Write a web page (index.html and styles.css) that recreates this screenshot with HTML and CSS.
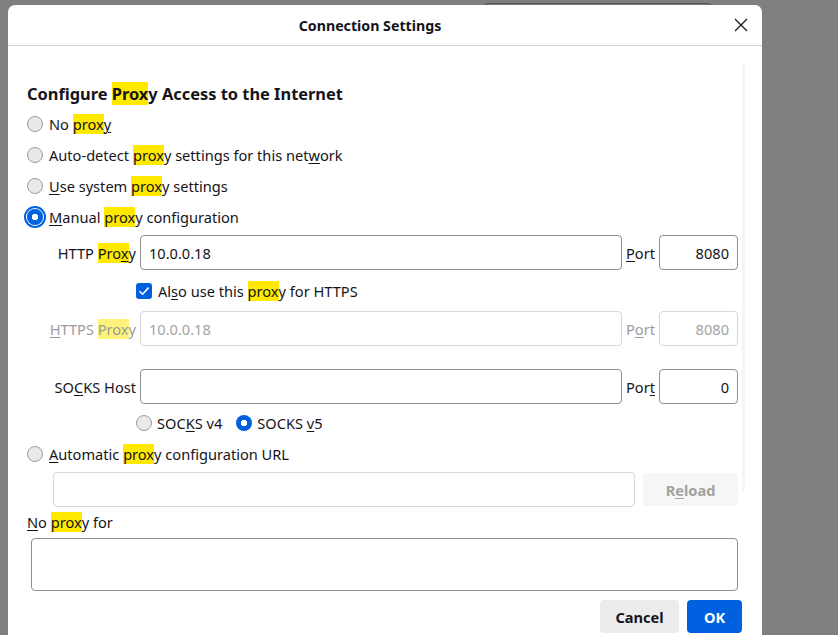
FILE: index.html
```html
<!DOCTYPE html>
<html>
<head>
<meta charset="utf-8">
<link rel="stylesheet" href="styles.css">
</head>
<body>
<div class="backdrop-box"></div>
<div class="dialog">
  <div class="header">
    <div class="title">Connection Settings</div>
    <div class="close">
      <svg width="14" height="14" viewBox="0 0 14 14"><path d="M1 1 L13 13 M13 1 L1 13" stroke="#1a1a1a" stroke-width="1.3" fill="none"/></svg>
    </div>
  </div>
  <div class="body">
    <div class="scroll">
      <div class="content">
        <h1 class="heading">Configure <mark>Prox</mark>y Access to the Internet</h1>
        <div class="radio-row"><span class="radio"></span><span>No <mark>prox</mark><u>y</u></span></div>
        <div class="radio-row"><span class="radio"></span><span>Auto-detect <mark>prox</mark>y settings for this net<u>w</u>ork</span></div>
        <div class="radio-row"><span class="radio"></span><span><u>U</u>se system <mark>prox</mark>y settings</span></div>
        <div class="radio-row"><span class="radio checked focus"></span><span><u>M</u>anual <mark>prox</mark>y configuration</span></div>

        <div class="grid">
          <label class="lbl">HTTP <mark>Pro<u>x</u></mark>y</label>
          <div class="input">10.0.0.18</div>
          <label class="port-lbl"><u>P</u>ort</label>
          <div class="input num">8080</div>

          <div class="check-row"><span class="checkbox"><svg width="16" height="16" viewBox="0 0 16 16"><path d="M3.5 8.2 L6.6 11.2 L12.6 4.6" stroke="#fff" stroke-width="1.6" fill="none"/></svg></span><span>Al<u>s</u>o use this <mark>prox</mark>y for HTTPS</span></div>

          <label class="lbl disabled"><u>H</u>TTPS <mark class="dim">Prox</mark>y</label>
          <div class="input disabled">10.0.0.18</div>
          <label class="port-lbl disabled">P<u>o</u>rt</label>
          <div class="input num disabled">8080</div>

          <label class="lbl socks">SO<u>C</u>KS Host</label>
          <div class="input socks"></div>
          <label class="port-lbl socks">Por<u>t</u></label>
          <div class="input num socks">0</div>

          <div class="socks-row">
            <span class="radio-inline"><span class="radio"></span><span>SOC<u>K</u>S v4</span></span>
            <span class="radio-inline"><span class="radio checked"></span><span>SOCKS <u>v</u>5</span></span>
          </div>
        </div>

        <div class="radio-row auto"><span class="radio"></span><span><u>A</u>utomatic <mark>prox</mark>y configuration URL</span></div>
        <div class="url-row">
          <div class="input url disabled-border"></div>
          <div class="reload">R<u>e</u>load</div>
        </div>
        <div class="noproxy-label"><u>N</u>o <mark>prox</mark>y for</div>
        <div class="textarea"></div>
      </div>
      <div class="scrollbar"></div>
    </div>
    <div class="buttons">
      <div class="btn cancel">Cancel</div>
      <div class="btn ok">OK</div>
    </div>
  </div>
</div>
</body>
</html>
```

FILE: styles.css
```css
html, body {
  margin: 0;
  padding: 0;
  height: 100%;
  overflow: hidden;
}
body {
  background: #7f7f7f;
  font-family: "Noto Sans", "DejaVu Sans", sans-serif;
  font-size: 14.6px;
  color: #15141a;
  position: relative;
}
.backdrop-box {
  position: absolute;
  left: 483px;
  top: 3px;
  width: 228px;
  height: 20px;
  border: 1px solid #555;
  border-radius: 5px;
  background: #7c7c7c;
}
.dialog {
  position: absolute;
  left: 8px;
  top: 5px;
  width: 754px;
  height: 640px;
  background: #fff;
  border-radius: 7px 7px 0 0;
  display: flex;
  flex-direction: column;
}
.header {
  height: 40px;
  border-bottom: 1px solid #d4d4d4;
  display: flex;
  align-items: center;
  position: relative;
  flex-shrink: 0;
}
.title {
  flex: 1;
  text-align: center;
  font-weight: bold;
  font-size: 14.2px;
  padding-right: 30px;
  padding-top: 1px;
}
.close {
  position: absolute;
  right: 14px;
  top: 13px;
  width: 14px;
  height: 14px;
  display: flex;
}
.body {
  display: flex;
  flex-direction: column;
}
.scroll {
  display: flex;
  height: 554px;
  overflow: hidden;
}
.content {
  width: 711px;
  padding-left: 19px;
  flex-shrink: 0;
}
.scrollbar {
  width: 3px;
  margin-left: 4px;
  margin-top: 17px;
  height: 428px;
  background: #f5f5f5;
}
mark {
  background: #ffe900;
  color: inherit;
}
mark.dim {
  background: #fff27a;
}
u {
  text-decoration-thickness: 1px;
  text-underline-offset: 2px;
}
.heading {
  font-size: 16.4px;
  font-weight: bold;
  margin: 36px 0 0 0;
  height: 26px;
  line-height: 24px;
}
.radio-row {
  display: flex;
  align-items: center;
  height: 31px;
  gap: 6px;
}
.radio {
  width: 16px;
  height: 16px;
  box-sizing: border-box;
  border-radius: 50%;
  border: 1px solid #9a9a9a;
  background: #e9e9e9;
  flex-shrink: 0;
}
.radio.checked {
  border: none;
  background: radial-gradient(circle, #fff 0 3px, #0061e0 3.5px);
}
.radio.focus {
  box-shadow: 0 0 0 1px #fff, 0 0 0 3px #0061e0;
}
.grid {
  display: grid;
  grid-template-columns: 109px 482px 29px 79px;
  column-gap: 4px;
  align-items: center;
  margin-top: 3px;
}
.lbl {
  text-align: right;
  white-space: nowrap;
}
.port-lbl {
  white-space: nowrap;
}
.disabled {
  color: #9c9c9c;
}
.input {
  height: 35px;
  box-sizing: border-box;
  border: 1px solid #8f8f8f;
  border-radius: 4px;
  padding: 0 8px;
  display: flex;
  align-items: center;
}
.input.num {
  justify-content: flex-end;
}
.input.disabled, .disabled-border {
  border-color: #d8d8d8;
}
.input.disabled {
  color: #a4a4a4;
}
.check-row {
  grid-column: 2 / 5;
  margin-left: -4px;
  display: flex;
  align-items: center;
  gap: 6px;
  height: 41px;
}
.checkbox {
  width: 16px;
  height: 16px;
  background: #0061e0;
  border-radius: 3px;
  display: flex;
}
.socks {
  margin-top: 23px;
}
.socks-row {
  grid-column: 2 / 5;
  margin-left: -4px;
  display: flex;
  gap: 14px;
  height: 38px;
  align-items: center;
}
.radio-inline {
  display: flex;
  align-items: center;
  gap: 5px;
}
.radio-row.auto {
  height: 24px;
}
.url-row {
  display: flex;
  gap: 8px;
  margin-left: 26px;
  margin-top: 6px;
}
.url {
  width: 582px;
}
.reload {
  width: 95px;
  height: 33px;
  margin-top: 1px;
  background: #f6f6f6;
  border-radius: 4px;
  color: #a2a2a2;
  font-weight: bold;
  display: flex;
  align-items: center;
  justify-content: center;
}
.noproxy-label {
  margin-top: 4px;
  height: 26px;
  line-height: 22px;
}
.textarea {
  margin-left: 4px;
  width: 707px;
  height: 53px;
  box-sizing: border-box;
  border: 1px solid #8f8f8f;
  border-radius: 4px;
  margin-top: 1px;
}
.buttons {
  display: flex;
  justify-content: flex-end;
  gap: 8px;
  padding-right: 20px;
}
.btn {
  height: 33px;
  border-radius: 4px;
  font-weight: bold;
  display: flex;
  align-items: center;
  justify-content: center;
}
.cancel {
  width: 79px;
  background: #ececec;
  color: #15141a;
}
.ok {
  width: 55px;
  background: #0061e0;
  color: #fff;
}
```
